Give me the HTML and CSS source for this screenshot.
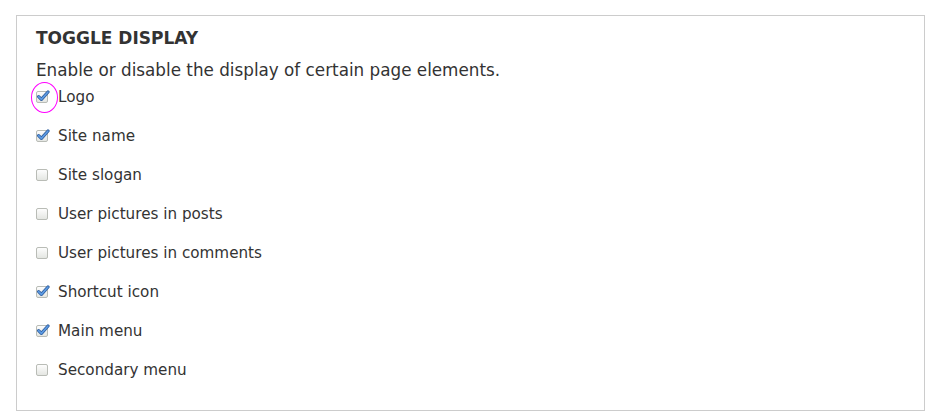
FILE: index.html
```html
<!DOCTYPE html>
<html>
<head>
<meta charset="utf-8">
<link rel="stylesheet" href="styles.css">
</head>
<body>
<fieldset class="panel">
  <h2 class="title">Toggle display</h2>
  <p class="desc">Enable or disable the display of certain page elements.</p>
  <ul class="opts">
    <li class="opt first"><span class="cb checked"><svg viewBox="0 0 14 14"><path class="ck-o" d="M2.6 7.6 L5.4 10.4 L12 3"/><path class="ck-i" d="M2.6 7.6 L5.4 10.4 L12 3"/></svg></span><span class="lbl">Logo</span><span class="ring"></span></li>
    <li class="opt"><span class="cb checked"><svg viewBox="0 0 14 14"><path class="ck-o" d="M2.6 7.6 L5.4 10.4 L12 3"/><path class="ck-i" d="M2.6 7.6 L5.4 10.4 L12 3"/></svg></span><span class="lbl">Site name</span></li>
    <li class="opt"><span class="cb"></span><span class="lbl">Site slogan</span></li>
    <li class="opt"><span class="cb"></span><span class="lbl">User pictures in posts</span></li>
    <li class="opt"><span class="cb"></span><span class="lbl">User pictures in comments</span></li>
    <li class="opt"><span class="cb checked"><svg viewBox="0 0 14 14"><path class="ck-o" d="M2.6 7.6 L5.4 10.4 L12 3"/><path class="ck-i" d="M2.6 7.6 L5.4 10.4 L12 3"/></svg></span><span class="lbl">Shortcut icon</span></li>
    <li class="opt"><span class="cb checked"><svg viewBox="0 0 14 14"><path class="ck-o" d="M2.6 7.6 L5.4 10.4 L12 3"/><path class="ck-i" d="M2.6 7.6 L5.4 10.4 L12 3"/></svg></span><span class="lbl">Main menu</span></li>
    <li class="opt"><span class="cb"></span><span class="lbl">Secondary menu</span></li>
  </ul>
</fieldset>
</body>
</html>
```
FILE: styles.css
```css
html, body {
  margin: 0;
  padding: 0;
  background: #fff;
}
body {
  padding: 15px 20px 0 16px;
  font-family: "DejaVu Sans", sans-serif;
  color: #333;
}
.panel {
  margin: 0;
  width: 909px;
  height: 396px;
  box-sizing: border-box;
  border: 1px solid #ccc;
  padding: 0 19px;
}
.title {
  margin: 11px 0 0 0;
  font-size: 17px;
  font-weight: bold;
  text-transform: uppercase;
  line-height: 22px;
  color: #333;
}
.desc {
  margin: 10px 0 0 0;
  font-size: 16.8px;
  line-height: 22px;
}
.opts {
  list-style: none;
  margin: 5px 0 0 0;
  padding: 0;
}
.opt {
  position: relative;
  display: flex;
  align-items: center;
  height: 22px;
  margin-bottom: 17px;
  font-size: 15.2px;
}
.cb {
  width: 12px;
  height: 12px;
  box-sizing: border-box;
  border: 1px solid #b9bcb6;
  border-radius: 2px;
  background: linear-gradient(#fdfdfd, #e4e6e2);
  margin-right: 10px;
  position: relative;
  flex: none;
}
.cb svg {
  position: absolute;
  left: -1px;
  top: -3px;
  width: 14px;
  height: 14px;
}
.ck-o {
  fill: none;
  stroke: #2f5e9e;
  stroke-width: 3.2;
  stroke-linecap: round;
  stroke-linejoin: round;
}
.ck-i {
  fill: none;
  stroke: #5d9be3;
  stroke-width: 1.6;
  stroke-linecap: round;
  stroke-linejoin: round;
}
.ring {
  position: absolute;
  left: -5px;
  top: -4px;
  width: 25px;
  height: 29px;
  border: 1px solid #f0f;
  border-radius: 50%;
}
```
